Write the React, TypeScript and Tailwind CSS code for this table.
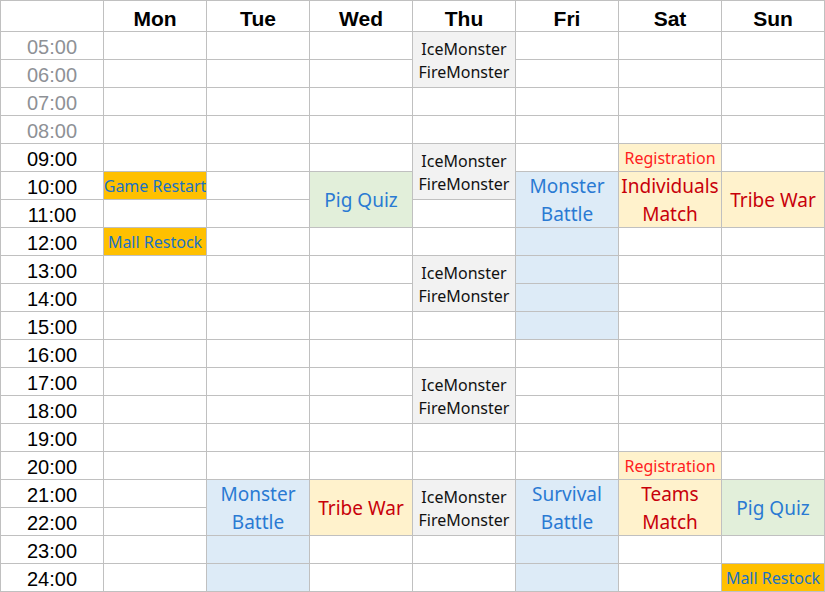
import React from "react";

type Kind = "gold" | "blue" | "green" | "yellow" | "reg" | "gray";

interface Ev {
  day: number; // 0 = Mon
  row: number; // 0 = 05:00
  span?: 1 | 2;
  lines?: string[];
  kind: Kind;
  big?: boolean;
}

const kinds: Record<Kind, string> = {
  gold: "bg-[#ffc000] text-[#1b72c4]",
  blue: "bg-[#ddebf7] text-[#2a7ad3]",
  green: "bg-[#e2efda] text-[#2a7ad3]",
  yellow: "bg-[#fff2cc] text-[#c8000a]",
  reg: "bg-[#fff2cc] text-[#ff2020]",
  gray: "bg-[#f2f2f2] text-[#111111]",
};

const days = ["Mon", "Tue", "Wed", "Thu", "Fri", "Sat", "Sun"];
const hours = Array.from({ length: 20 }, (_, i) => `${String(i + 5).padStart(2, "0")}:00`);

const monsters = ["IceMonster", "FireMonster"];

const events: Ev[] = [
  // Mon
  { day: 0, row: 5, lines: ["Game Restart"], kind: "gold" },
  { day: 0, row: 7, lines: ["Mall Restock"], kind: "gold" },
  // Tue
  { day: 1, row: 16, span: 2, lines: ["Monster", "Battle"], kind: "blue", big: true },
  { day: 1, row: 18, kind: "blue" },
  { day: 1, row: 19, kind: "blue" },
  // Wed
  { day: 2, row: 5, span: 2, lines: ["Pig Quiz"], kind: "green", big: true },
  { day: 2, row: 16, span: 2, lines: ["Tribe War"], kind: "yellow", big: true },
  // Thu
  { day: 3, row: 0, span: 2, lines: monsters, kind: "gray" },
  { day: 3, row: 4, span: 2, lines: monsters, kind: "gray" },
  { day: 3, row: 8, span: 2, lines: monsters, kind: "gray" },
  { day: 3, row: 12, span: 2, lines: monsters, kind: "gray" },
  { day: 3, row: 16, span: 2, lines: monsters, kind: "gray" },
  // Fri
  { day: 4, row: 5, span: 2, lines: ["Monster", "Battle"], kind: "blue", big: true },
  { day: 4, row: 7, kind: "blue" },
  { day: 4, row: 8, kind: "blue" },
  { day: 4, row: 9, kind: "blue" },
  { day: 4, row: 10, kind: "blue" },
  { day: 4, row: 16, span: 2, lines: ["Survival", "Battle"], kind: "blue", big: true },
  { day: 4, row: 18, kind: "blue" },
  { day: 4, row: 19, kind: "blue" },
  // Sat
  { day: 5, row: 4, lines: ["Registration"], kind: "reg" },
  { day: 5, row: 5, span: 2, lines: ["Individuals", "Match"], kind: "yellow", big: true },
  { day: 5, row: 15, lines: ["Registration"], kind: "reg" },
  { day: 5, row: 16, span: 2, lines: ["Teams", "Match"], kind: "yellow", big: true },
  // Sun
  { day: 6, row: 5, span: 2, lines: ["Tribe War"], kind: "yellow", big: true },
  { day: 6, row: 16, span: 2, lines: ["Pig Quiz"], kind: "green", big: true },
  { day: 6, row: 19, lines: ["Mall Restock"], kind: "gold" },
];

const evFont = { fontFamily: '"Noto Sans", "Open Sans", sans-serif' };
const sheetFont = { fontFamily: '"Liberation Sans", Arial, sans-serif' };

function EventCell({ ev }: { ev: Ev }) {
  return (
    <div
      className={`${kinds[ev.kind]} ${ev.span === 2 ? "row-span-2" : ""} flex flex-col items-center justify-center whitespace-nowrap overflow-hidden ${
        ev.big ? "text-[19px] leading-[28px] pt-px" : "text-[16px] leading-[23px] pt-[2px]"
      }`}
      style={evFont}
    >
      {ev.lines?.map((l) => (
        <span key={l}>{l}</span>
      ))}
    </div>
  );
}

export default function App() {
  const cells: React.ReactNode[] = [];

  hours.forEach((h, r) => {
    cells.push(
      <div
        key={`t${r}`}
        className={`bg-white flex items-end justify-center text-[20px] leading-[23px] ${
          r < 4 ? "text-[#8e9196]" : "text-black"
        }`}
      >
        {h}
      </div>
    );
    for (let d = 0; d < 7; d++) {
      const starts = events.find((e) => e.day === d && e.row === r);
      const covered = events.find((e) => e.day === d && e.span === 2 && e.row === r - 1);
      if (starts) cells.push(<EventCell key={`${d}-${r}`} ev={starts} />);
      else if (!covered) cells.push(<div key={`${d}-${r}`} className="bg-white" />);
    }
  });

  return (
    <div
      className="w-[825px] h-[592px] overflow-hidden bg-[#c0c0c0] pt-px px-px grid grid-cols-[repeat(8,102px)] grid-rows-[30px_repeat(20,27px)] gap-px"
      style={sheetFont}
    >
      <div className="bg-white" />
      {days.map((d) => (
        <div
          key={d}
          className="bg-white flex items-end justify-center text-[21px] leading-[24px] font-bold text-black"
        >
          {d}
        </div>
      ))}
      {cells}
    </div>
  );
}
